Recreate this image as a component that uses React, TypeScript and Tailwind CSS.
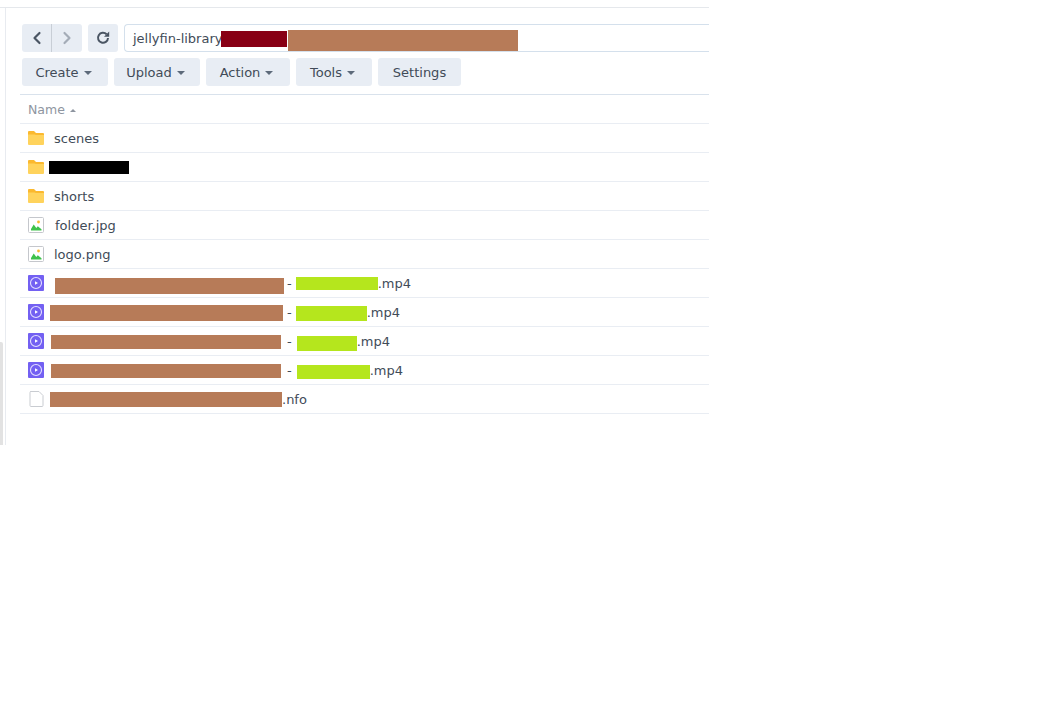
// File browser toolbar + list, redactions kept as coloured blocks
import { ChevronLeft, ChevronRight } from 'lucide-react'

const BROWN = 'bg-[#b77b58]'
const LIME = 'bg-[#b5e61d]'

const Caret = ({ up = false }: { up?: boolean }) => (
  <span
    className={`inline-block w-0 h-0 ${
      up
        ? 'border-x-[3px] border-x-transparent border-b-[3.5px] border-b-[#8e95a0]'
        : 'border-x-4 border-x-transparent border-t-4 border-t-[#5d6a7a]'
    }`}
  />
)

const FolderIcon = () => (
  <svg width="16" height="14" viewBox="0 0 16 14" className="block">
    <path d="M0 1a1 1 0 0 1 1-1h5l2 2h7a1 1 0 0 1 1 1v2H0z" fill="#fbb92f" />
    <path d="M0 3.500h6.500l1.500.5h8v9a1 1 0 0 1-1 1H1a1 1 0 0 1-1-1z" fill="#ffd35c" />
  </svg>
)

const ImageIcon = () => (
  <svg width="16" height="16" viewBox="0 0 16 16" className="block">
    <rect x="0.5" y="0.5" width="15" height="15" rx="1" fill="#fff" stroke="#c5c7cc" />
    <circle cx="10.500" cy="5" r="1.400" fill="#fbb92f" />
    <path d="M3 13.500V12l2.700-4.500L8.300 11l1.500-1.700 3.700 3v1.200z" fill="#3fc24b" />
  </svg>
)

const VideoIcon = () => (
  <svg width="16" height="16" viewBox="0 0 16 16" className="block">
    <rect width="16" height="16" rx="1" fill="#7360f2" />
    <circle cx="8" cy="8" r="5.500" fill="none" stroke="#e4e0ff" strokeWidth="1.100" />
    <path d="M7 6.200L10 8l-3 1.800z" fill="#fff" />
  </svg>
)

const FileIcon = () => (
  <svg width="15" height="16" viewBox="0 0 15 16" className="block">
    <path d="M1.500.5h8.500l4 4v10a1 1 0 0 1-1 1h-11a1 1 0 0 1-1-1v-13a1 1 0 0 1 1-1z" fill="#fff" stroke="#c9ccd1" />
  </svg>
)

const RefreshIcon = () => (
  <svg width="14" height="14" viewBox="0 0 14 14" className="block text-[#4a5563]">
    <path d="M10.600 3.300A5 5 0 1 0 12 7" fill="none" stroke="currentColor" strokeWidth="2" />
    <path d="M8 5.800h5.200V0.600z" fill="currentColor" />
  </svg>
)

const Block = ({ w, h, color, className = '' }: { w: string; h: string; color: string; className?: string }) => (
  <span className={`inline-block shrink-0 ${w} ${h} ${color} ${className}`} />
)

const Row = ({ icon, children }: { icon: React.ReactNode; children: React.ReactNode }) => (
  <div className="flex h-[29px] items-center border-b border-[#e9edf3] pl-2 text-[13px] text-[#414b58]">
    <span className="flex w-4 h-4 items-center justify-center shrink-0">{icon}</span>
    {children}
  </div>
)

const ToolButton = ({ label, w, caret = true }: { label: string; w: string; caret?: boolean }) => (
  <button
    className={`flex h-7 ${w} items-center justify-center gap-[5px] rounded-[3px] bg-[#e8edf4] pt-[2px] text-[13px] text-[#414b58] ${
      caret ? 'pr-[3px]' : ''
    }`}
  >
    {label}
    {caret && <Caret />}
  </button>
)

export default function App() {
  return (
    <div className="min-h-[710px] bg-white font-['DejaVu_Sans',sans-serif]">
      <div className="w-[709px] h-[445px] flex flex-col overflow-hidden">
        <div className="h-2 shrink-0 border-b border-[#e5e8ec]" />
        <div className="flex flex-1 min-h-0">
          {/* left edge with window scrollbar */}
          <div className="w-[5px] shrink-0 flex flex-col justify-end">
            <div className="h-[103px] w-[3px] bg-[#e2e2e2] rounded-tr-[2px]" />
          </div>
          <div className="flex-1 min-w-0 border-l border-[#e8ebf0] pl-[14px] pt-4">
            <div className="ml-[2px] flex gap-[6px]">
              <div className="flex h-7 w-[60px] shrink-0 rounded-[3px] bg-[#e8edf4]">
                <div className="flex w-[30px] items-center justify-center border-r border-[#c8ced6]">
                  <ChevronLeft size={20} strokeWidth={2.6} className="text-[#4a5563]" />
                </div>
                <div className="flex w-[30px] items-center justify-center">
                  <ChevronRight size={20} strokeWidth={2.6} className="text-[#a4acb7]" />
                </div>
              </div>
              <div className="flex h-7 w-[30px] shrink-0 items-center justify-center rounded-[3px] bg-[#e8edf4]">
                <RefreshIcon />
              </div>
              <div className="flex h-7 flex-1 items-center rounded-l-[4px] border border-r-0 border-[#d4e0ec] pl-2 text-[13px] text-[#414b58]">
                <span className="pt-[2px]">jellyfin-library</span>
                <Block w="w-[66px]" h="h-4" color="bg-[#880015]" className="-ml-px mt-px" />
                <Block w="w-[230px]" h="h-[21px]" color={BROWN} className="ml-px mt-[5px]" />
              </div>
            </div>

            <div className="ml-[2px] mt-[6px] flex gap-[6px]">
              <ToolButton label="Create" w="w-[86px]" />
              <ToolButton label="Upload" w="w-[86px]" />
              <ToolButton label="Action" w="w-[84px]" />
              <ToolButton label="Tools" w="w-[76px]" />
              <ToolButton label="Settings" w="w-[83px]" caret={false} />
            </div>

            <div className="mt-2 border-t border-[#d9e2ec]">
              <div className="flex h-[29px] items-center gap-[5px] border-b border-[#e9edf3] pl-2 pt-[2px] text-[12.5px] text-[#8e95a0]">
                Name <Caret up />
              </div>
              <Row icon={<FolderIcon />}><span className="ml-[10px] pt-[2px]">scenes</span></Row>
              <Row icon={<FolderIcon />}><Block w="w-20" h="h-[13px]" color="bg-black" className="ml-[5px] mt-px" /></Row>
              <Row icon={<FolderIcon />}><span className="ml-[10px] pt-[2px]">shorts</span></Row>
              <Row icon={<ImageIcon />}><span className="ml-[11px] pt-[2px]">folder.jpg</span></Row>
              <Row icon={<ImageIcon />}><span className="ml-[10px] pt-[2px]">logo.png</span></Row>
              <Row icon={<VideoIcon />}>
                <Block w="w-[229px]" h="h-4" color={BROWN} className="ml-[11px] mt-[6px]" />
                <span className="ml-[3px] pt-[2px]">-</span>
                <Block w="w-[82px]" h="h-[13px]" color={LIME} className="ml-1" />
                <span className="pt-[2px]">.mp4</span>
              </Row>
              <Row icon={<VideoIcon />}>
                <Block w="w-[233px]" h="h-4" color={BROWN} className="ml-[6px] mt-[2px]" />
                <span className="ml-1 pt-[2px]">-</span>
                <Block w="w-[71px]" h="h-[15px]" color={LIME} className="ml-1 mt-[3px]" />
                <span className="pt-[2px]">.mp4</span>
              </Row>
              <Row icon={<VideoIcon />}>
                <Block w="w-[230px]" h="h-[14px]" color={BROWN} className="ml-[7px] mt-[2px]" />
                <span className="ml-[6px] pt-[2px]">-</span>
                <Block w="w-[60px]" h="h-[15px]" color={LIME} className="ml-[5px] mt-[5px]" />
                <span className="pt-[2px]">.mp4</span>
              </Row>
              <Row icon={<VideoIcon />}>
                <Block w="w-[230px]" h="h-[14px]" color={BROWN} className="ml-[7px] mt-[2px]" />
                <span className="ml-[6px] pt-[2px]">-</span>
                <Block w="w-[73px]" h="h-[14px]" color={LIME} className="ml-[5px] mt-1" />
                <span className="pt-[2px]">.mp4</span>
              </Row>
              <Row icon={<FileIcon />}>
                <Block w="w-[232px]" h="h-[15px]" color={BROWN} className="ml-[6px] mt-px" />
                <span className="pt-[2px]">.nfo</span>
              </Row>
            </div>
          </div>
        </div>
      </div>
    </div>
  )
}
